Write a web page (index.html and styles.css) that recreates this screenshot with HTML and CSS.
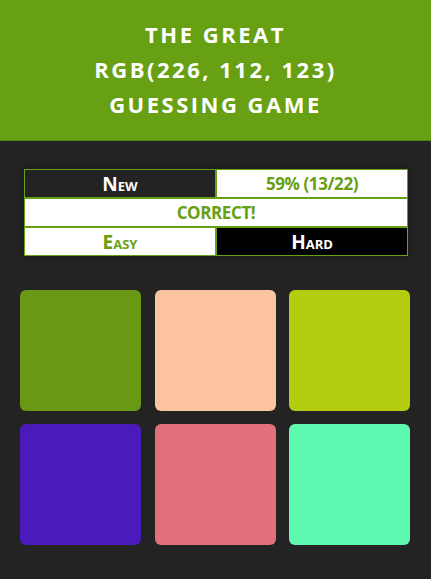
FILE: index.html
```html
<!DOCTYPE html>
<html>
<head>
<meta charset="utf-8">
<link rel="stylesheet" href="styles.css">
</head>
<body>
<header class="title">
  <div>THE GREAT</div>
  <div>RGB(226, 112, 123)</div>
  <div>GUESSING GAME</div>
</header>
<section class="panel">
  <div class="row">
    <div class="cell dark sc">New</div>
    <div class="cell light">59% (13/22)</div>
  </div>
  <div class="row">
    <div class="cell light">CORRECT!</div>
  </div>
  <div class="row">
    <div class="cell light sc">Easy</div>
    <div class="cell black sc">Hard</div>
  </div>
</section>
<main class="grid">
  <div class="sq c1"></div>
  <div class="sq c2"></div>
  <div class="sq c3"></div>
  <div class="sq c4"></div>
  <div class="sq c5"></div>
  <div class="sq c6"></div>
</main>
</body>
</html>
```
FILE: styles.css
```css
html, body {
  margin: 0;
  padding: 0;
  background: #232323;
  font-family: "Open Sans", "DejaVu Sans", sans-serif;
}
.title {
  background: #67a012;
  border-bottom: 1px solid #55850f;
  color: #fff;
  text-align: center;
  font-weight: 700;
  font-size: 22px;
  letter-spacing: 2.5px;
  line-height: 35px;
  padding: 17px 0 18px;
}
.panel {
  margin: 28px 0 0 24px;
  width: 384px;
  display: flex;
  flex-direction: column;
  box-shadow: 0 0 8px rgba(0,0,0,0.35);
}
.row {
  display: flex;
}
.cell {
  flex: 1;
  height: 27px;
  border: 1px solid #67a012;
  display: flex;
  align-items: center;
  justify-content: center;
  font-weight: 700;
  font-size: 17px;
  letter-spacing: -0.4px;
}
.sc {
  font-variant: small-caps;
  font-size: 19px;
  letter-spacing: 0;
}
.dark { background: #232323; color: #fff; }
.light { background: #fff; color: #67a012; }
.black { background: #000; color: #fff; }
.grid {
  margin: 34px 0 0 20px;
  width: 390px;
  display: grid;
  grid-template-columns: repeat(3, 121px);
  grid-auto-rows: 121px;
  column-gap: 13.5px;
  row-gap: 13px;
}
.sq { border-radius: 6px; }
.c1 { background: #689814; }
.c2 { background: #fcc39f; }
.c3 { background: #b3cc0f; }
.c4 { background: #4b1abb; }
.c5 { background: #e2707b; }
.c6 { background: #5ff8b0; }
```
